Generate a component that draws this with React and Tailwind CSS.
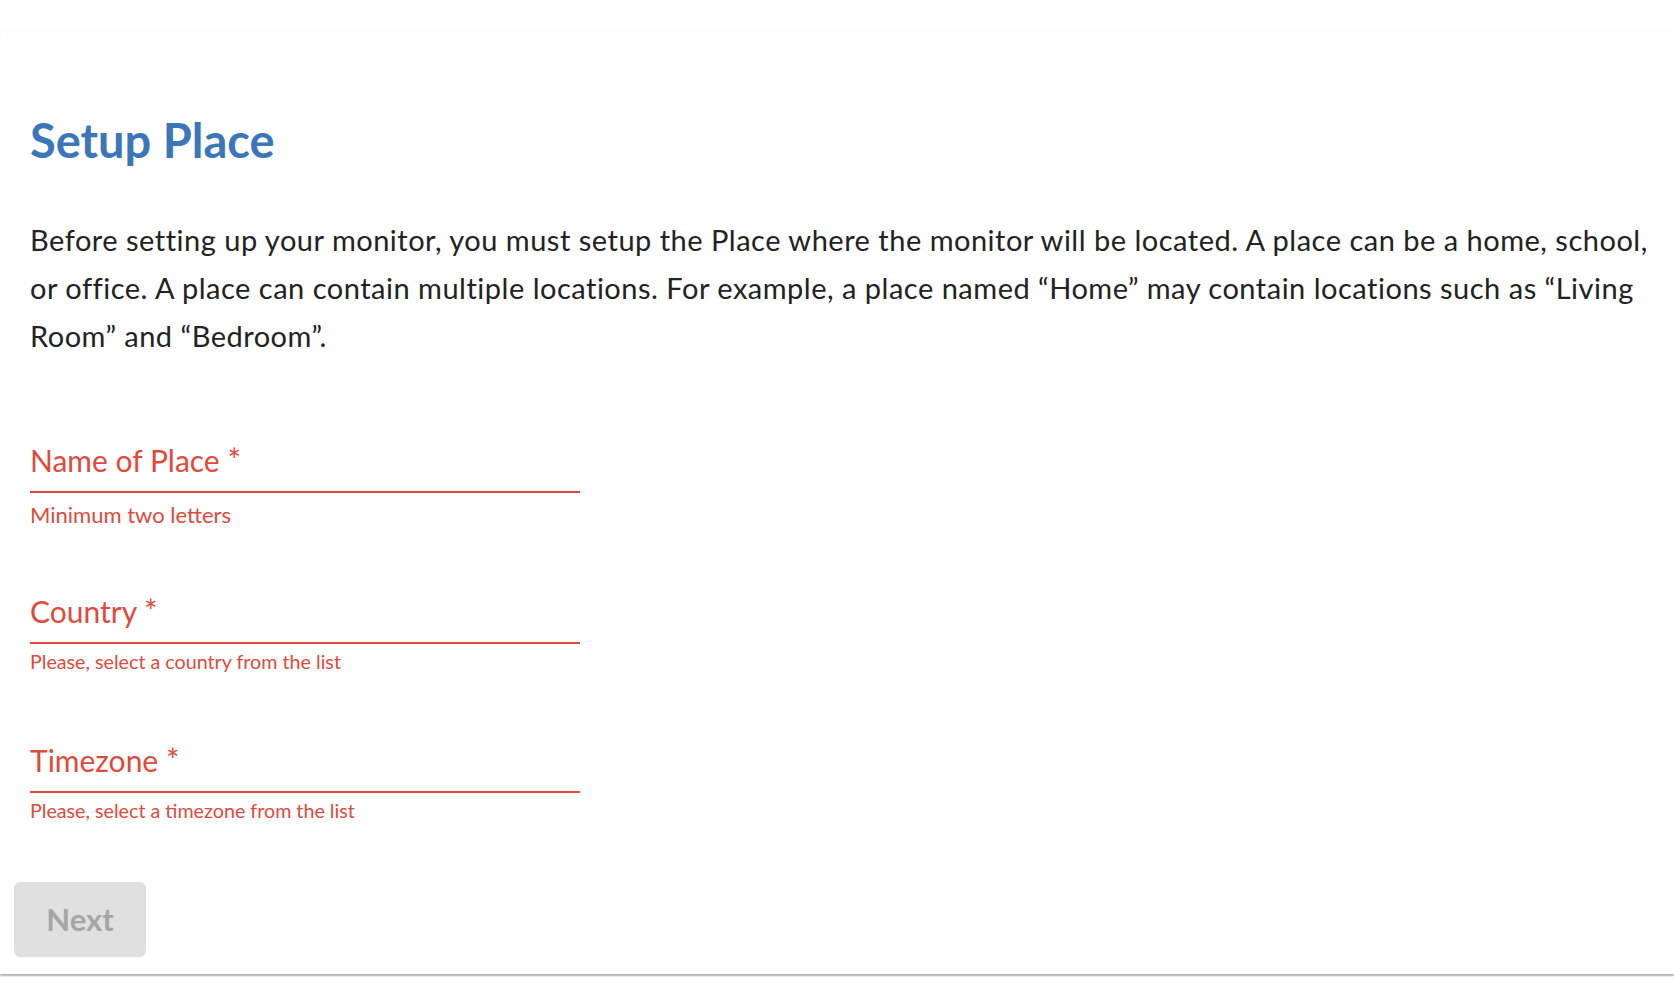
const RED = "text-[#e04a3c]";

function Field({ label, hint, hintSize }) {
  return (
    <div className="w-[550px]">
      <div className="h-[53px] border-b-2 border-[#e04a3c] pb-[11px] flex items-end">
        <span className={`text-[30px] leading-[40px] ${RED}`}>
          {label} <span className="text-[32px]">*</span>
        </span>
      </div>
      <div className={`${hintSize} ${RED}`}>{hint}</div>
    </div>
  );
}

export default function App() {
  return (
    <div className="min-h-screen bg-white pt-[32px] font-['Lato',sans-serif]">
      <div className="bg-white rounded-tl-[4px] shadow-[0_2px_2px_rgba(0,0,0,0.3),0_0_3px_rgba(0,0,0,0.05)] pl-[30px] pr-[20px] pb-[17px]">
        <h1 className="pt-[82px] text-[47px] leading-[53px] font-bold text-[#3b76b9]">
          Setup Place
        </h1>

        <p className="mt-[49px] text-[29px] leading-[48px] tracking-[0.5px] text-[#222222] whitespace-nowrap">
          Before setting up your monitor, you must setup the Place where the monitor will be located. A place can be a home, school,
          <br />
          or office. A place can contain multiple locations. For example, a place named “Home” may contain locations such as “Living
          <br />
          Room” and “Bedroom”.
        </p>

        <div className="mt-[80px]">
          <Field label="Name of Place" hint="Minimum two letters" hintSize="mt-[9px] text-[22px] leading-[26px]" />
        </div>
        <div className="mt-[63px]">
          <Field label="Country" hint="Please, select a country from the list" hintSize="mt-[6px] text-[19.7px] leading-[24px]" />
        </div>
        <div className="mt-[66px]">
          <Field label="Timezone" hint="Please, select a timezone from the list" hintSize="mt-[6px] text-[19.7px] leading-[24px]" />
        </div>

        <button
          disabled
          className="mt-[59px] -ml-[16px] w-[132px] h-[75px] rounded-[6px] bg-[#e0e0e0] text-[#a6a6a6] text-[31px] font-bold"
        >
          Next
        </button>
      </div>
    </div>
  );
}
